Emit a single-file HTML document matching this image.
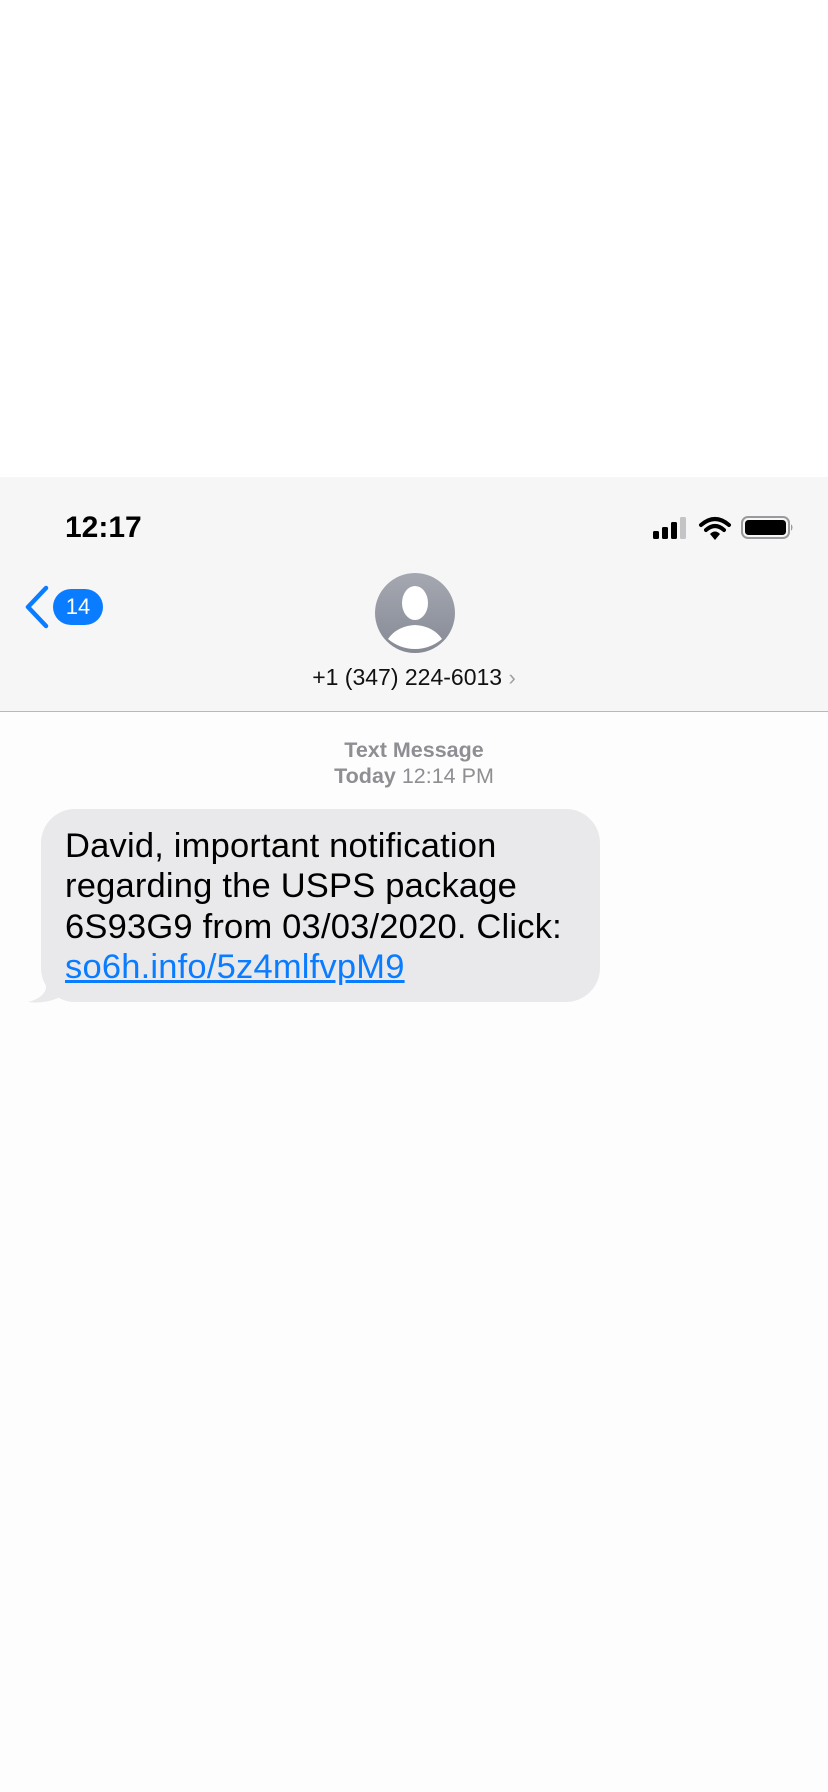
<!DOCTYPE html>
<html><head><meta charset="utf-8"><style>
html,body{margin:0;padding:0}
body{width:828px;height:1792px;background:#fdfdfd;position:relative;overflow:hidden;font-family:"Liberation Sans",Arial,sans-serif}
.top{position:absolute;left:0;top:0;width:828px;height:477px;background:#fff}
.hdr{position:absolute;left:0;top:477px;width:828px;height:234px;background:#f6f6f6;border-bottom:1px solid #b8b8bc}
.time{position:absolute;left:65px;top:511px;font-size:30px;font-weight:bold;color:#000}
.badge{position:absolute;left:53px;top:589px;width:50px;height:36px;border-radius:18px;background:#0a7cff;color:#fff;font-size:22px;text-align:center;line-height:36px}
.num{position:absolute;left:0;width:828px;top:664px;text-align:center;font-size:23px;color:#111}
.meta{position:absolute;left:0;width:828px;text-align:center;font-size:21.5px;color:#8e8e93}
.bub{position:absolute;left:41px;top:809px;width:559px;height:193px;background:#e9e9eb;border-radius:34px}
.txt{position:absolute;left:65px;top:826px;font-size:34.5px;line-height:40.3px;color:#000;white-space:nowrap;letter-spacing:0.2px}
a{color:#0a7cff;text-decoration:underline}
</style></head><body>
<div class="top"></div>
<div class="hdr"></div>
<div class="time">12:17</div>
<svg style="position:absolute;left:650px;top:514px" width="150" height="30" viewBox="0 0 150 30">
<rect x="3" y="17" width="6" height="8" rx="1.5" fill="#000"/>
<rect x="12" y="13" width="6" height="12" rx="1.5" fill="#000"/>
<rect x="21" y="8" width="6" height="17" rx="1.5" fill="#000"/>
<rect x="30" y="3" width="6" height="22" rx="1.5" fill="#c4c4c6"/>
<path d="M51 11 Q65 -1 79 11" stroke="#000" stroke-width="4" fill="none" stroke-linecap="round"/>
<path d="M56 16 Q65 8 74 16" stroke="#000" stroke-width="4" fill="none" stroke-linecap="round"/>
<path d="M60 20 L65 26 L70 20 Q65 15 60 20Z" fill="#000"/>
<rect x="92" y="3" width="47" height="21" rx="6" fill="none" stroke="#9a9a9e" stroke-width="2"/>
<rect x="95" y="6" width="41" height="15" rx="3.5" fill="#000"/>
<path d="M141 10 Q144 13.5 141 17Z" fill="#9a9a9e"/>
</svg>
<svg style="position:absolute;left:22px;top:585px" width="30" height="44" viewBox="0 0 30 44"><path d="M24 3 L6 22 L24 41" stroke="#0a7cff" stroke-width="4.5" fill="none" stroke-linecap="round" stroke-linejoin="round"/></svg>
<div class="badge">14</div>
<svg style="position:absolute;left:375px;top:573px" width="80" height="80" viewBox="0 0 80 80">
<defs><linearGradient id="g" x1="0" y1="0" x2="0" y2="1"><stop offset="0" stop-color="#a5a8b1"/><stop offset="1" stop-color="#868a95"/></linearGradient><clipPath id="c"><circle cx="40" cy="40" r="40"/></clipPath></defs>
<circle cx="40" cy="40" r="40" fill="url(#g)"/>
<ellipse cx="40" cy="30" rx="13" ry="17" fill="#fff"/>
<g clip-path="url(#c)"><path d="M13 66 Q22 53 40 52 Q58 53 67 66 Q55 76 40 76 Q25 76 13 66Z" fill="#fff"/></g>
</svg>
<div class="num">+1 (347) 224-6013 <span style="color:#a0a0a5;font-size:22px">&#x203A;</span></div>
<div class="meta" style="top:738px;font-weight:bold">Text Message</div>
<div class="meta" style="top:764px"><b>Today</b> 12:14 PM</div>
<div class="bub"></div>
<svg style="position:absolute;left:26px;top:970px" width="50" height="34" viewBox="0 0 50 34"><path d="M20 0 L20 18 Q18 28 2 32 Q18 34 32 28 L50 28 L50 0Z" fill="#e9e9eb"/></svg>
<div class="txt">David, important notification<br>regarding the USPS package<br>6S93G9 from 03/03/2020. Click:<br><a>so6h.info/5z4mlfvpM9</a></div>
</body></html>
